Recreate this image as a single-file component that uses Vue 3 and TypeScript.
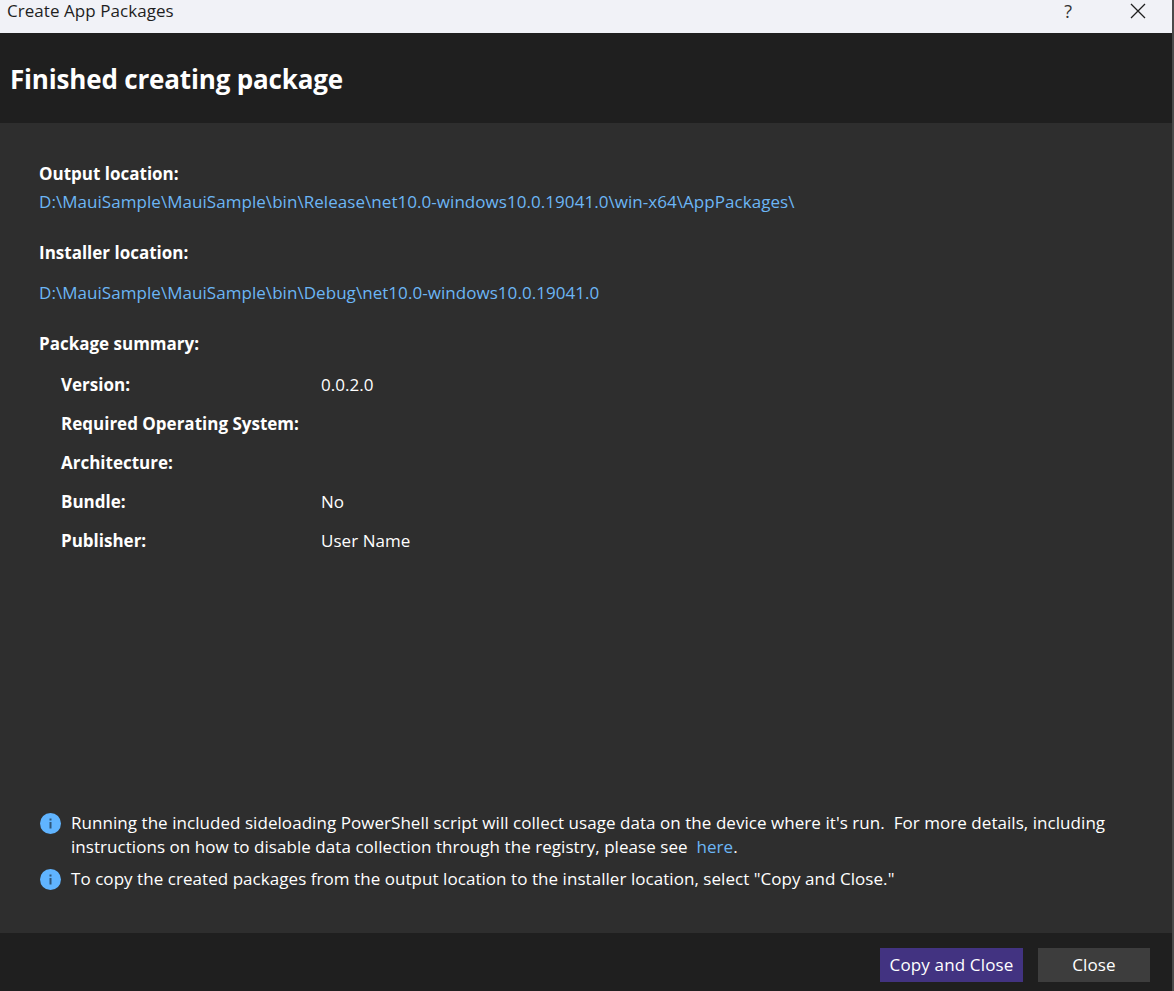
<script setup lang="ts">
interface SummaryRow {
  label: string;
  value: string;
}

const summary: SummaryRow[] = [
  { label: 'Version:', value: '0.0.2.0' },
  { label: 'Required Operating System:', value: '' },
  { label: 'Architecture:', value: '' },
  { label: 'Bundle:', value: 'No' },
  { label: 'Publisher:', value: 'User Name' },
];
</script>

<template>
  <div class="dialog">
    <div class="titlebar">
      <span class="title">Create App Packages</span>
      <div class="controls">
        <span class="help">?</span>
        <svg class="close-x" width="16" height="16" viewBox="0 0 16 16">
          <path d="M1 1L15 15M15 1L1 15" stroke="#1f1f1f" stroke-width="1.3" fill="none" />
        </svg>
      </div>
    </div>

    <header class="banner">
      <h1>Finished creating package</h1>
    </header>

    <main class="content">
      <div class="details">
        <div class="label">Output location:</div>
        <a class="link output">D:\MauiSample\MauiSample\bin\Release\net10.0-windows10.0.19041.0\win-x64\AppPackages\</a>
        <div class="label installer">Installer location:</div>
        <a class="link installer-link">D:\MauiSample\MauiSample\bin\Debug\net10.0-windows10.0.19041.0</a>
        <div class="label summary-title">Package summary:</div>
        <div class="summary">
          <div v-for="row in summary" :key="row.label" class="summary-row">
            <span class="label">{{ row.label }}</span>
            <span>{{ row.value }}</span>
          </div>
        </div>
      </div>

      <div class="notes">
        <div class="note">
          <svg class="info" width="21" height="21" viewBox="0 0 21 21">
            <circle cx="10.5" cy="10.5" r="10.5" fill="#60b4ff" />
            <rect x="9.5" y="9" width="2" height="6.5" fill="#2f5578" />
            <rect x="9.5" y="5.5" width="2" height="2" fill="#2f5578" />
          </svg>
          <p>Running the included sideloading PowerShell script will collect usage data on the device where it's run.&nbsp; For more details, including instructions on how to disable data collection through the registry, please see &nbsp;<a class="link">here</a>.</p>
        </div>
        <div class="note">
          <svg class="info" width="21" height="21" viewBox="0 0 21 21">
            <circle cx="10.5" cy="10.5" r="10.5" fill="#60b4ff" />
            <rect x="9.5" y="9" width="2" height="6.5" fill="#2f5578" />
            <rect x="9.5" y="5.5" width="2" height="2" fill="#2f5578" />
          </svg>
          <p>To copy the created packages from the output location to the installer location, select "Copy and Close."</p>
        </div>
      </div>
    </main>

    <footer class="footer">
      <button class="btn primary">Copy and Close</button>
      <button class="btn">Close</button>
    </footer>
  </div>
</template>

<style>
html,
body {
  margin: 0;
  background: #2e2e2e;
}
</style>

<style scoped>
.dialog {
  width: 1174px;
  height: 991px;
  display: flex;
  flex-direction: column;
  overflow: hidden;
  box-sizing: border-box;
  border-right: 2px solid #4a4a4a;
  background: #2e2e2e;
  color: #fff;
  font-family: 'Open Sans', 'Noto Sans', sans-serif;
  font-size: 17px;
  letter-spacing: 0.05px;
}

.titlebar {
  height: 33px;
  flex: none;
  display: flex;
  justify-content: space-between;
  background: #f1f2f7;
  color: #1f1f1f;
  margin-right: -2px;
  padding-left: 7px;
}

.title {
  line-height: 22px;
  font-size: 17px;
}

.controls {
  display: flex;
  align-items: flex-start;
}

.help {
  font-size: 18px;
  line-height: 22px;
  margin-right: 58px;
  color: #333;
}

.close-x {
  margin: 3px 28px 0 0;
}

.banner {
  height: 90px;
  flex: none;
  box-sizing: border-box;
  display: flex;
  align-items: center;
  padding: 2px 0 0 10px;
  background: #1f1f1f;
}

.banner h1 {
  margin: 0;
  font-size: 26px;
  font-weight: 700;
  letter-spacing: -0.17px;
}

.content {
  flex: 1;
  display: flex;
  flex-direction: column;
  justify-content: space-between;
  padding: 39px 39px 0;
}

.label {
  font-weight: 700;
  letter-spacing: 0;
}

.details > .label,
.details > .link {
  display: block;
  line-height: 24px;
}

.output {
  margin-top: 4px;
}

.installer {
  margin-top: 27px;
}

.installer-link {
  margin-top: 16px;
}

.summary-title {
  margin-top: 27px;
}

.summary {
  margin: 17px 0 0 22px;
}

.summary-row {
  display: grid;
  grid-template-columns: 260px 1fr;
  line-height: 24px;
  margin-bottom: 15px;
}

.link {
  color: #6cb6f5;
}

.notes {
  padding-bottom: 34px;
}

.note {
  display: flex;
  gap: 10px;
  margin-bottom: 8px;
}

.note p {
  margin: 0;
  line-height: 24px;
  width: 1060px;
}

.info {
  flex: none;
  margin: 2px 0 0 1px;
}

.footer {
  height: 58px;
  flex: none;
  display: flex;
  justify-content: flex-end;
  gap: 15px;
  padding: 15px 22px 0 0;
  box-sizing: border-box;
  background: #1f1f1f;
}

.btn {
  width: 112px;
  height: 34px;
  border: 0;
  padding: 0 0 2px;
  background: #3d3d3d;
  color: #fff;
  font: inherit;
  letter-spacing: 0.15px;
}

.primary {
  width: 143px;
  background: #423381;
}
</style>
